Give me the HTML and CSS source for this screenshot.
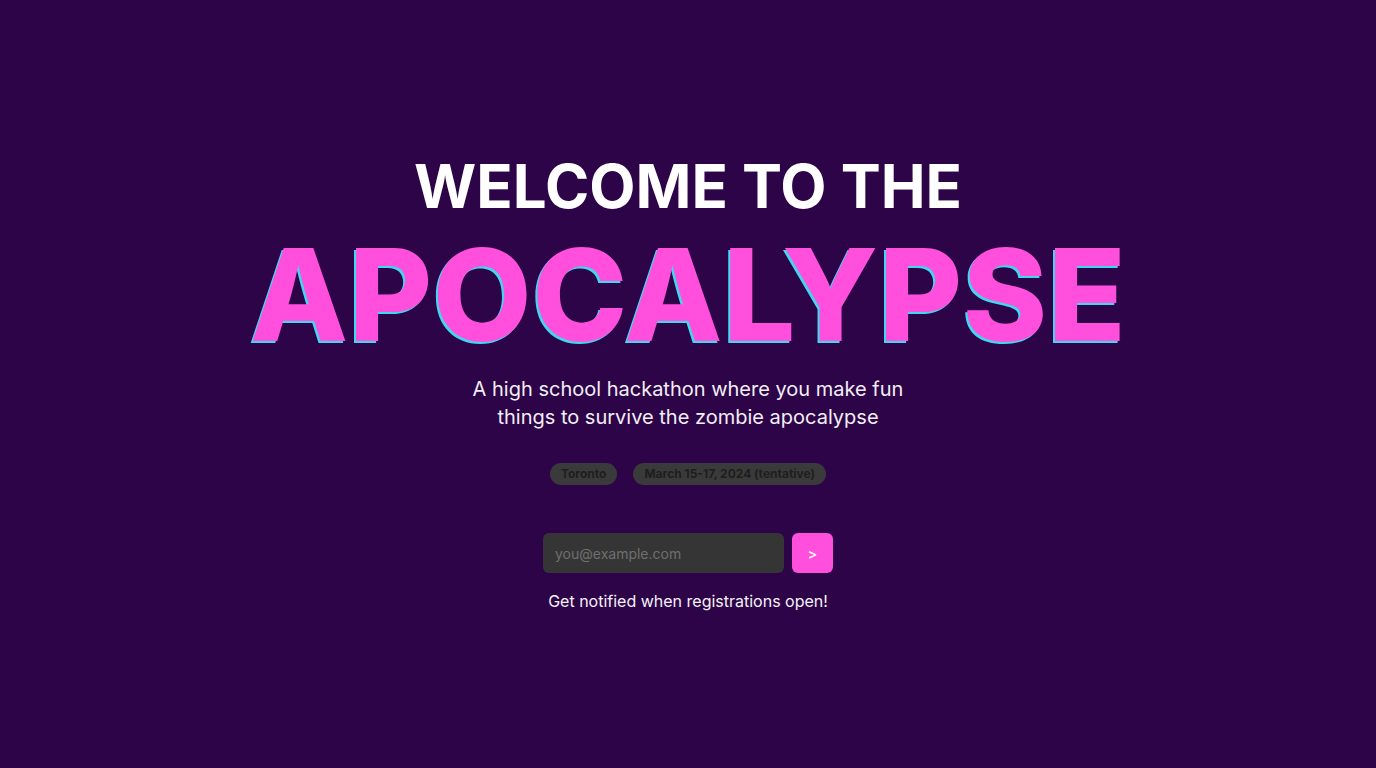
FILE: index.html
```html
<!DOCTYPE html>
<html lang="en">
<head>
<meta charset="utf-8">
<title>Welcome to the Apocalypse</title>
<link rel="stylesheet" href="styles.css">
</head>
<body>
<main class="hero">
  <h1 class="title">
    <span class="title-top">WELCOME TO THE</span>
    <span class="title-main">APOCALYPSE</span>
  </h1>
  <p class="subtitle">A high school hackathon where you make fun things to survive the zombie apocalypse</p>
  <div class="tags">
    <span class="tag">Toronto</span>
    <span class="tag">March 15-17, 2024 (tentative)</span>
  </div>
  <form class="signup">
    <input class="email" type="email" placeholder="you@example.com">
    <button class="go" type="button">&gt;</button>
  </form>
  <p class="note">Get notified when registrations open!</p>
</main>
</body>
</html>
```

FILE: styles.css
```css
html, body {
  margin: 0;
  padding: 0;
  height: 100%;
}
body {
  background: #2d0447;
  font-family: Inter, "Noto Sans", sans-serif;
  color: #fff;
}
.hero {
  min-height: 768px;
  display: flex;
  flex-direction: column;
  align-items: center;
  padding-top: 156px;
  box-sizing: border-box;
}
.title {
  margin: 0;
  display: flex;
  flex-direction: column;
  align-items: center;
  font-weight: 800;
}
.title-top {
  font-size: 60px;
  line-height: 60px;
  font-weight: 700;
}
.title-main {
  font-size: 128px;
  line-height: 112px;
  font-weight: 800;
  letter-spacing: 0.5px;
  color: #ff4fdc;
  text-shadow: -2px 2px 0 #3fd8f0;
  margin-top: 23px;
}
.subtitle {
  margin: 24px 0 0;
  width: 440px;
  text-align: center;
  font-size: 20px;
  line-height: 28px;
  color: #f2eef6;
}
.tags {
  display: flex;
  gap: 16px;
  margin-top: 32px;
}
.tag {
  background: #3a3a3a;
  color: #1e1e1e;
  font-size: 12px;
  font-weight: 700;
  line-height: 16px;
  padding: 3px 11px;
  border-radius: 999px;
}
.signup {
  display: flex;
  gap: 8px;
  margin-top: 48px;
}
.email {
  width: 241px;
  height: 40px;
  box-sizing: border-box;
  border: none;
  border-radius: 6px;
  background: #353535;
  padding: 0 12px;
  font-family: inherit;
  font-size: 14px;
  color: #ddd;
  outline: none;
}
.email::placeholder {
  color: #6f6f6f;
}
.go {
  width: 41px;
  height: 40px;
  border: none;
  border-radius: 6px;
  background: #ff4fdc;
  color: #fff;
  font-family: inherit;
  font-size: 14px;
  font-weight: 600;
}
.note {
  margin: 18px 0 0;
  font-size: 16px;
  line-height: 20px;
  color: #f5f2f8;
}
```
